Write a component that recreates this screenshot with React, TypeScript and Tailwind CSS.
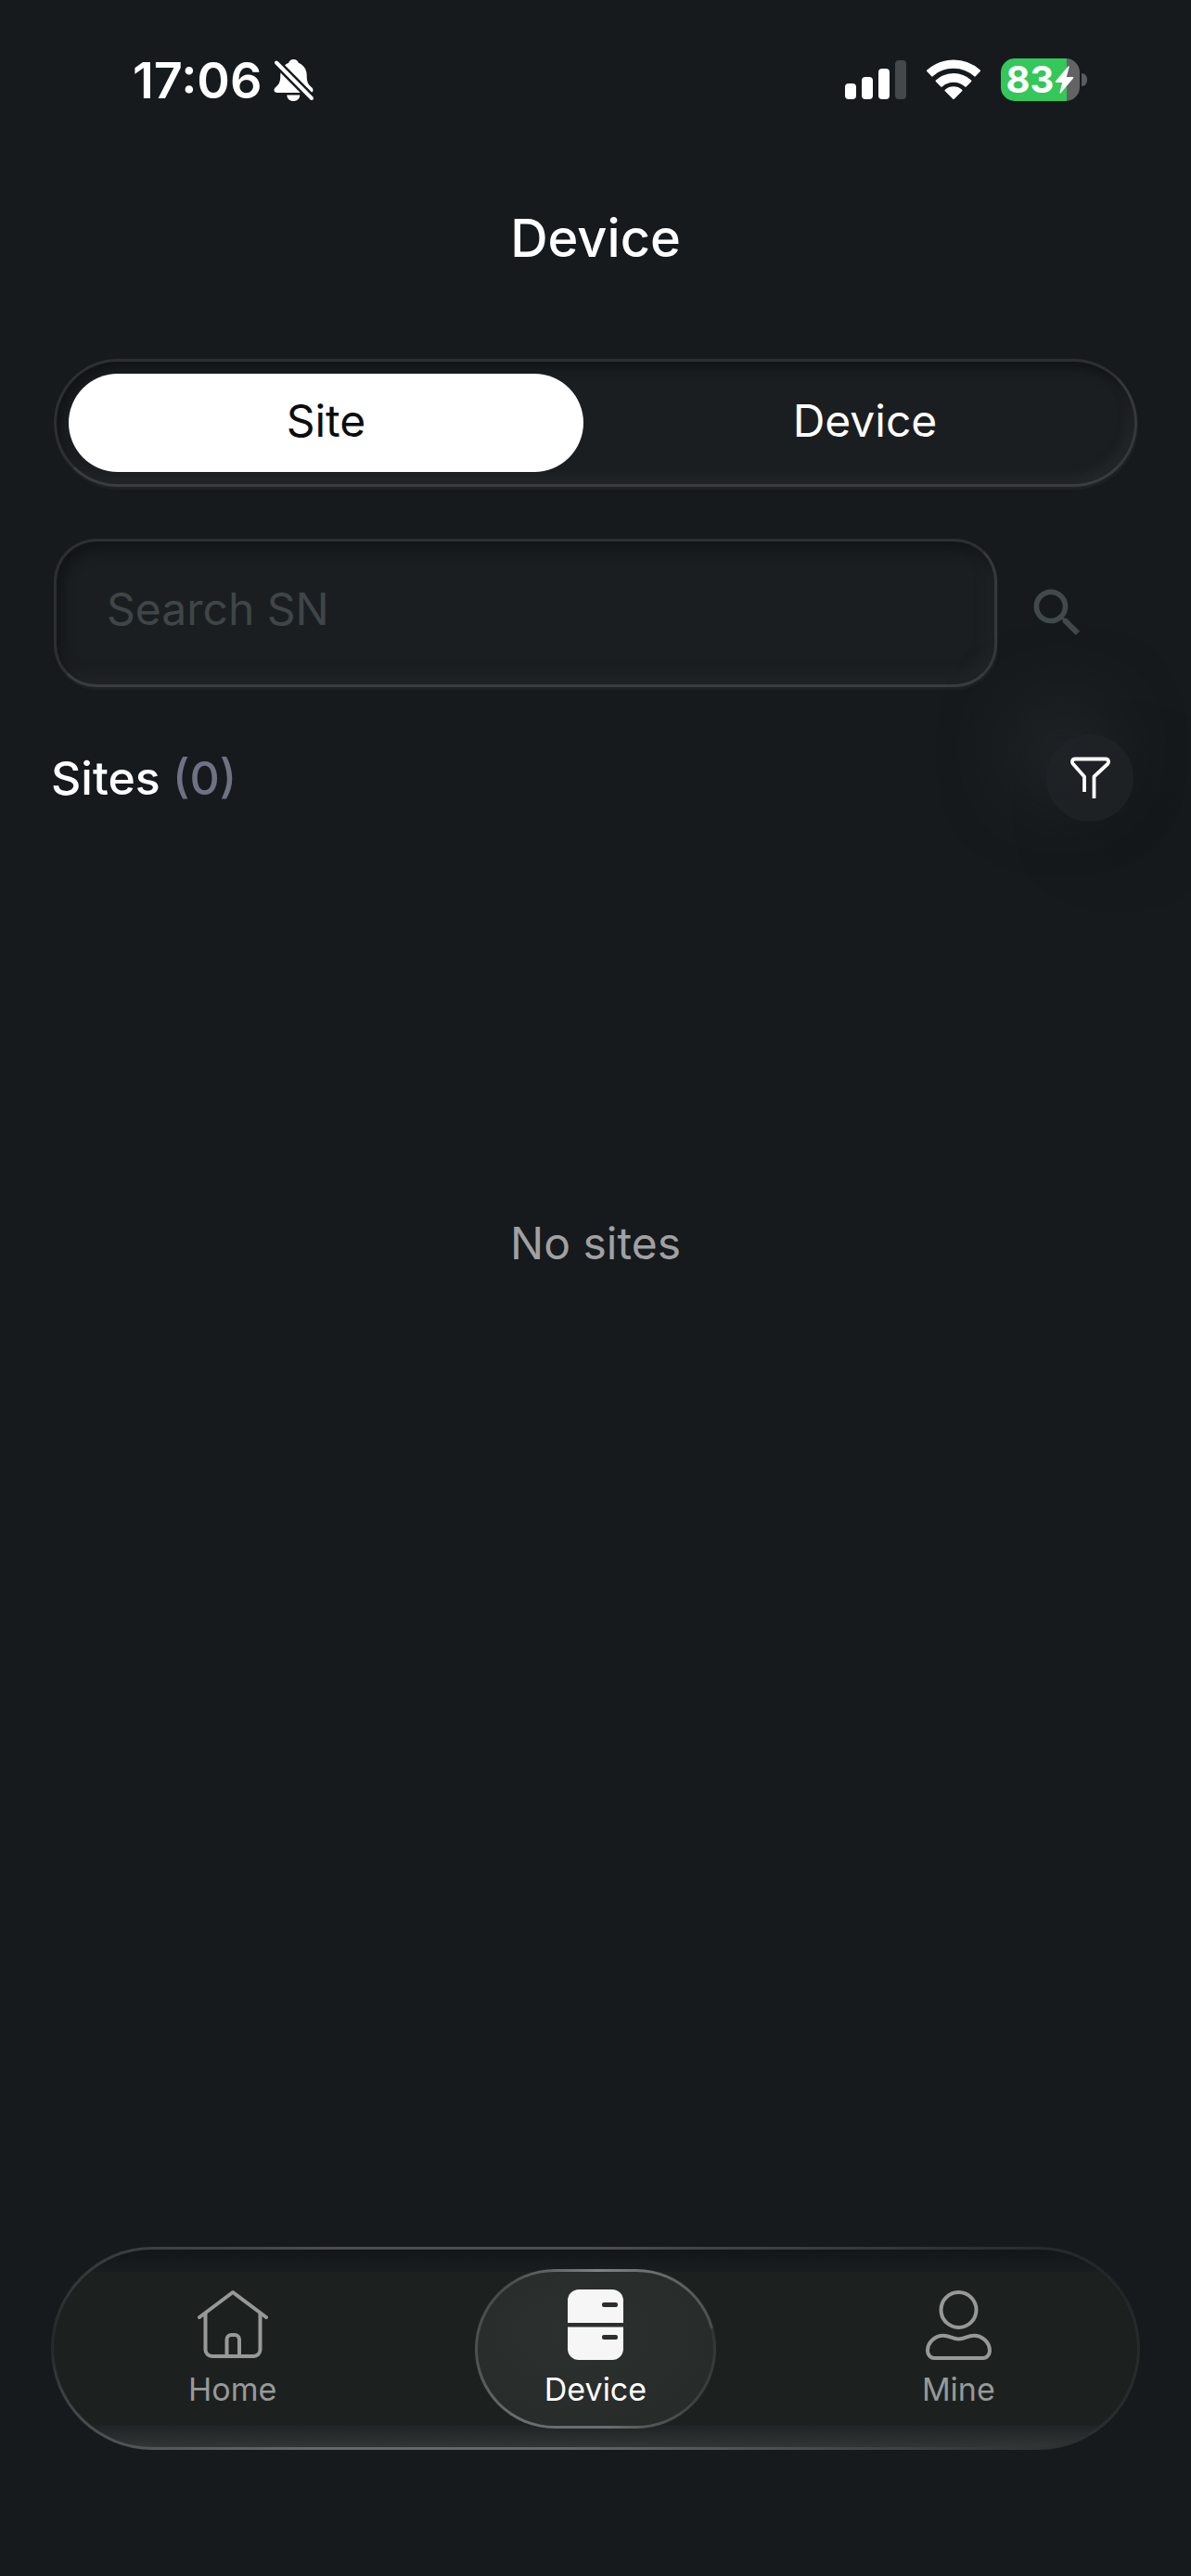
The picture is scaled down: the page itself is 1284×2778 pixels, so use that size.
import { useState } from "react";
import type { ReactNode } from "react";
import { MdSearch } from "react-icons/md";

const BG = "#161a1d";

function MutedBell() {
  return (
    <svg width="44" height="47" viewBox="0 0 44 47" fill="none" aria-label="Silent mode">
      <path
        d="M21.500 1c-2.600 0-4.700 1.500-5.300 3.700C10.500 7 7.300 12 7.300 18c0 6.500-1 9.500-4.500 12.500C1 32 0.500 33 0.500 34.200 0.500 36 2 37 4 37h35c2 0 3.500-1 3.500-2.800 0-1.200-.5-2.200-2.300-3.700C36.700 27.500 35.700 24.500 35.700 18c0-6-3.200-11-8.900-13.300C26.200 2.500 24.100 1 21.500 1Z"
        fill="#fff"
      />
      <path d="M14.300 39.500h14c0 3.800-3 6.500-7 6.500s-7-2.700-7-6.500Z" fill="#fff" />
      <path d="M0 1.500 44 46" stroke={BG} strokeWidth="9" />
      <path d="M3 4.500 41 43" stroke="#fff" strokeWidth="4" strokeLinecap="round" />
    </svg>
  );
}

function Signal() {
  return (
    <svg width="66" height="42" viewBox="0 0 66 42" aria-label="Signal">
      <rect x="0" y="25" width="12" height="17" rx="4" fill="#fff" />
      <rect x="18" y="18" width="12" height="24" rx="4" fill="#fff" />
      <rect x="36" y="9" width="12" height="33" rx="4" fill="#fff" />
      <rect x="54" y="0" width="12" height="42" rx="4" fill="#45484a" />
    </svg>
  );
}

function Wifi() {
  return (
    <svg
      width="58"
      height="44"
      viewBox="0 0 58 44"
      fill="#fff"
      stroke="#fff"
      strokeWidth="2"
      strokeLinejoin="round"
      aria-label="Wi-Fi"
    >
      <path d="M1 12.300A42 42 0 0 1 57 12.300L52 17.600A34 34 0 0 0 6 17.600Z" />
      <path d="M10.600 23.300A27 27 0 0 1 47.400 23.300L42 28.800A19 19 0 0 0 16 28.800Z" />
      <path d="M20.500 33.500A13 13 0 0 1 37.500 33.500L29 42Z" />
    </svg>
  );
}

function Battery() {
  return (
    <div className="flex items-center gap-0.5" aria-label="Battery 83 percent, charging">
      <div className="flex h-[46px] w-[85px] items-center justify-center gap-px rounded-[15px] bg-[linear-gradient(to_right,#34c759_84%,#636366_84%)]">
        <span className="text-[40px] leading-[46px] font-bold">83</span>
        <svg width="21" height="30" viewBox="0 0 21 30" fill="#fff">
          <path d="M14.500.5 1 16.500c-.6.700-.2 1.500.6 1.500h6.600L5.500 28.600c-.3 1 .5 1.300 1.100.600L20 13.500c.6-.7.200-1.500-.6-1.500h-6.600L15.700 1.200c.2-1-.6-1.400-1.200-.7Z" />
        </svg>
      </div>
      <div className="h-[14px] w-[6px] rounded-r-full bg-[#5a5c60]" />
    </div>
  );
}

function FilterIcon() {
  return (
    <svg
      width="43"
      height="46"
      viewBox="0 0 43 46"
      fill="none"
      stroke="#fff"
      strokeWidth="3.800"
      strokeLinejoin="round"
    >
      <path d="M15 38V21.500L3 8C1 5.600 2 2.500 5 2.500h33c3 0 4 3.100 2 5.500L25.500 21.500V45" />
    </svg>
  );
}

function HomeIcon() {
  return (
    <svg
      width="76"
      height="76"
      viewBox="0 0 76 76"
      fill="none"
      stroke="currentColor"
      strokeWidth="4"
      strokeLinecap="round"
      strokeLinejoin="round"
    >
      <path d="M2 30 38 3l36 27" />
      <path d="M8.500 26v39a7 7 0 0 0 7 7h45a7 7 0 0 0 7-7V26" />
      <path d="M31.500 71V54a5 5 0 0 1 5-5h3.500a5 5 0 0 1 5 5v17" />
    </svg>
  );
}

function DeviceIcon() {
  return (
    <svg width="60" height="76" viewBox="0 0 60 76" fill="#f6f6f6">
      <path d="M0 36V12A12 12 0 0 1 12 0h36a12 12 0 0 1 12 12v24Z" />
      <path d="M0 40.500h60V64a12 12 0 0 1-12 12H12A12 12 0 0 1 0 64Z" />
      <rect x="37" y="14" width="17" height="5" rx="2" fill="#2a2e2d" />
      <rect x="37" y="49" width="17" height="5" rx="2" fill="#2a2e2d" />
    </svg>
  );
}

function MineIcon() {
  return (
    <svg width="73" height="76" viewBox="0 0 73 76" fill="none" stroke="currentColor" strokeWidth="4">
      <circle cx="36.500" cy="22" r="19" />
      <path d="M10 74C6 74 3 70 3 66 3 57 11 49.700 20 49.700c7 0 10 3.800 16.500 3.800S46 49.700 53 49.700C62 49.700 70 57 70 66c0 4-3 8-7 8Z" />
    </svg>
  );
}

const tabs: { label: string; icon: ReactNode }[] = [
  { label: "Home", icon: <HomeIcon /> },
  { label: "Device", icon: <DeviceIcon /> },
  { label: "Mine", icon: <MineIcon /> },
];

export default function App() {
  const [segment, setSegment] = useState("Site");
  const [tab, setTab] = useState("Device");

  return (
    <div className="flex min-h-screen flex-col bg-[#161a1d] font-['Inter',sans-serif] text-white">
      <div className="flex h-[172px] items-center justify-between pr-28 pl-[143px]">
        <div className="flex items-center gap-3">
          <span className="text-[54px] font-semibold">17:06</span>
          <MutedBell />
        </div>
        <div className="flex items-center gap-[22px]">
          <Signal />
          <Wifi />
          <Battery />
        </div>
      </div>

      <h1 className="flex h-[170px] items-center justify-center text-[56px] font-medium">Device</h1>

      <main className="mt-[45px] flex flex-col">
        <div
          role="tablist"
          className="mx-[58px] grid grid-cols-2 gap-[26px] rounded-full border-[3px] border-[#2d2f34] border-r-[#36383d] border-b-[#3a3c42] bg-[#1b1e20] p-[13px] shadow-[inset_5px_8px_10px_#111518,inset_-6px_-8px_10px_#222629,1px_3px_2px_#1e2224]"
        >
          {["Site", "Device"].map((name) => (
            <button
              key={name}
              type="button"
              role="tab"
              aria-selected={segment === name}
              onClick={() => setSegment(name)}
              className={
                segment === name
                  ? "h-[106px] rounded-full bg-white pb-1 text-[48px] text-[#0c0d0e]"
                  : "h-[106px] rounded-full pb-1 text-[48px] text-white"
              }
            >
              {name}
            </button>
          ))}
        </div>

        <form className="mx-[58px] mt-14 flex items-center" onSubmit={(e) => e.preventDefault()}>
          <input
            type="text"
            aria-label="Search SN"
            placeholder="Search SN"
            className="h-[160px] min-w-0 flex-1 rounded-[46px] border-[3px] border-[#2d2f34] border-r-[#36383d] border-b-[#3a3c42] bg-[#1b1e20] px-[54px] pb-2.5 text-[48px] shadow-[inset_5px_8px_14px_#111518,inset_-6px_-8px_14px_#222629,1px_3px_2px_#1e2224] outline-none placeholder:text-[#3f4648]"
          />
          <button type="submit" aria-label="Search" className="mr-[52px] ml-[31px]">
            <MdSearch size={68} color="#42494b" />
          </button>
        </form>

        <div className="mt-[51px] mr-[62px] ml-[55px] flex items-center justify-between">
          <h2 className="text-[50px] font-medium">
            Sites <span className="text-[#6e7284]">(0)</span>
          </h2>
          <button
            type="button"
            aria-label="Filter"
            className="flex size-[94px] items-center justify-center rounded-full bg-[linear-gradient(135deg,#1f2327,#1c2023)] shadow-[-30px_-30px_80px_#24292d,30px_30px_60px_#14181b]"
          >
            <FilterIcon />
          </button>
        </div>

        <p className="mt-[419px] text-center text-[48px] text-[#a0a1a3]">No sites</p>
      </main>

      <footer className="mt-auto px-[55px] pb-[136px]">
        <div className="rounded-full bg-[radial-gradient(ellipse_60%_60%_at_35%_100%,#636568_20%,transparent),radial-gradient(ellipse_60%_55%_at_38%_0%,#4b4d4c_20%,transparent),linear-gradient(#222627,#2b2e2f)] p-[3px]">
          <nav
            aria-label="Main"
            className="rounded-full bg-[linear-gradient(#121618,#191d1e_24px,#1c211f_24px,#1c211f_calc(100%-24px),#1f2323_calc(100%-24px),#313536)] pt-[21px] pb-5"
          >
            <div className="-mx-[3px] grid grid-cols-3">
              {tabs.map(({ label, icon }) => {
                const active = tab === label;
                return (
                  <button
                    key={label}
                    type="button"
                    aria-current={active ? "page" : undefined}
                    onClick={() => setTab(label)}
                    className={
                      active
                        ? "mx-auto w-[260px] rounded-full bg-[conic-gradient(from_80deg,#323635,#3c403f_10%,#6a6d6d_25%,#6a6d6d_42%,#4c5050_52%,#484c4b_62%,#808383_78%,#6c6f6f_88%,#484c4b)] p-[3px] text-white"
                        : "mx-auto w-[260px] rounded-full p-[3px] text-[#979999]"
                    }
                  >
                    <span
                      className={
                        active
                          ? "flex h-[166px] flex-col items-center gap-3 rounded-full bg-[radial-gradient(ellipse_at_40%_40%,#2c302f,#272b2a_80%)] pt-[19px]"
                          : "flex h-[166px] flex-col items-center gap-3 rounded-full pt-[19px]"
                      }
                    >
                      {icon}
                      <span className="text-[34px] leading-10">{label}</span>
                    </span>
                  </button>
                );
              })}
            </div>
          </nav>
        </div>
      </footer>
    </div>
  );
}
